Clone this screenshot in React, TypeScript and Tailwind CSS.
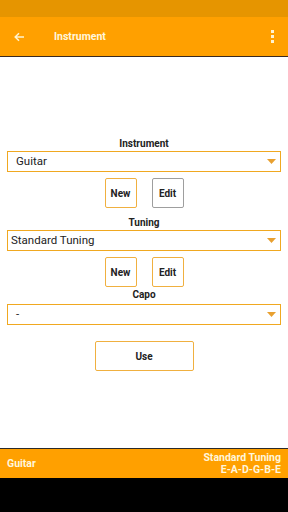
import React from "react";

function Select({ value, pl = "pl-[8px]" }: { value: string; pl?: string }) {
  return (
    <div className={`mx-[7px] h-[21px] border border-[#f0a820] flex items-center justify-between ${pl} pr-[4px]`}>
      <span className="text-[11.5px] text-[#222] leading-none">{value}</span>
      <svg width="9" height="6" viewBox="0 0 9 6"><path d="M0 0 L9 0 L4.5 5 Z" fill="#e8a030" /></svg>
    </div>
  );
}

function Btn({ label, gray = false, w = "w-[32px]" }: { label: string; gray?: boolean; w?: string }) {
  return (
    <div className={`${w} h-[30px] border ${gray ? "border-[#9e9e9e]" : "border-[#f0b040]"} rounded-[2px] flex items-center justify-center text-[10px] font-bold text-[#222]`}>
      {label}
    </div>
  );
}

export default function App() {
  return (
    <div className="w-[288px] h-[512px] flex flex-col bg-white" style={{ fontFamily: "Roboto, 'Noto Sans', sans-serif" }}>
      <div className="h-[17px] bg-[#e69500]" />
      <div className="h-[40px] bg-[#ffa000] flex items-center border-b border-[#3a2a20]">
        <svg className="ml-[14px]" width="11" height="10" viewBox="0 0 11 10">
          <path d="M10 5 H1.5 M5 1.2 L1.2 5 L5 8.8" stroke="#fff3d0" strokeWidth="1.5" fill="none" />
        </svg>
        <span className="ml-[29px] text-[10.5px] font-bold text-[#fff6dc]">Instrument</span>
        <div className="ml-auto mr-[14px] flex flex-col gap-[2px]">
          <div className="w-[3px] h-[3px] bg-[#fff3d0]" />
          <div className="w-[3px] h-[3px] bg-[#fff3d0]" />
          <div className="w-[3px] h-[3px] bg-[#fff3d0]" />
        </div>
      </div>
      <div className="flex-1 flex flex-col">
        <div className="h-[81px]" />
        <div className="text-center text-[10px] font-bold text-[#222] leading-[12px] mb-[1px]">Instrument</div>
        <Select value="Guitar" />
        <div className="flex justify-center gap-[15px] mt-[6px]">
          <Btn label="New" />
          <Btn label="Edit" gray />
        </div>
        <div className="text-center text-[10px] font-bold text-[#222] leading-[12px] mt-[9px] mb-[1px]">Tuning</div>
        <Select value="Standard Tuning" pl="pl-[3px]" />
        <div className="flex justify-center gap-[15px] mt-[6px]">
          <Btn label="New" />
          <Btn label="Edit" />
        </div>
        <div className="text-center text-[10px] font-bold text-[#222] leading-[12px] mt-[2px] mb-[3px]">Capo</div>
        <Select value="-" />
        <div className="flex justify-center mt-[16px]">
          <Btn label="Use" w="w-[99px]" />
        </div>
      </div>
      <div className="h-[30px] bg-[#ffa000] border-t border-[#2a2a2a] flex items-center justify-between px-[7px]">
        <span className="text-[10.5px] font-bold text-[#fff6dc]">Guitar</span>
        <div className="flex flex-col items-end text-[10.5px] font-bold text-[#fff6dc] leading-[12px]">
          <span>Standard Tuning</span>
          <span>E-A-D-G-B-E</span>
        </div>
      </div>
      <div className="h-[34px] bg-black" />
    </div>
  );
}
